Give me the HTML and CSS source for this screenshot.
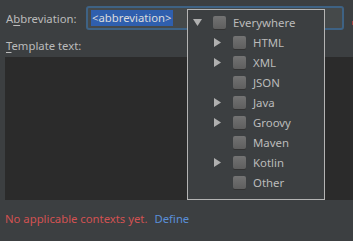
FILE: index.html
```html
<!DOCTYPE html>
<html>
<head>
<meta charset="utf-8">
<link rel="stylesheet" href="styles.css">
</head>
<body>
<div class="panel">
  <div class="abbr-row">
    <span class="label">A<u>b</u>breviation:</span>
    <div class="field"><span class="sel">&lt;abbreviation&gt;</span></div>
  </div>
  <div class="tpl-label"><u>T</u>emplate text:</div>
  <div class="editor"></div>
  <div class="msg"><span class="err">No applicable contexts yet.</span><span class="link">Define</span></div>
  <div class="mark"></div>
</div>
<div class="popup">
  <div class="item">
    <span class="arrow"><svg width="9" height="7" viewBox="0 0 9 7"><polygon points="0,0 9,0 4.5,7" fill="#b0b0b0"/></svg></span>
    <span class="cb"></span><span class="txt">Everywhere</span>
  </div>
  <div class="item child">
    <span class="arrow"><svg width="7" height="9" viewBox="0 0 7 9"><polygon points="0,0 7,4.5 0,9" fill="#b0b0b0"/></svg></span>
    <span class="cb"></span><span class="txt">HTML</span>
  </div>
  <div class="item child">
    <span class="arrow"><svg width="7" height="9" viewBox="0 0 7 9"><polygon points="0,0 7,4.5 0,9" fill="#b0b0b0"/></svg></span>
    <span class="cb"></span><span class="txt">XML</span>
  </div>
  <div class="item child">
    <span class="arrow"></span>
    <span class="cb"></span><span class="txt">JSON</span>
  </div>
  <div class="item child">
    <span class="arrow"><svg width="7" height="9" viewBox="0 0 7 9"><polygon points="0,0 7,4.5 0,9" fill="#b0b0b0"/></svg></span>
    <span class="cb"></span><span class="txt">Java</span>
  </div>
  <div class="item child">
    <span class="arrow"><svg width="7" height="9" viewBox="0 0 7 9"><polygon points="0,0 7,4.5 0,9" fill="#b0b0b0"/></svg></span>
    <span class="cb"></span><span class="txt">Groovy</span>
  </div>
  <div class="item child">
    <span class="arrow"></span>
    <span class="cb"></span><span class="txt">Maven</span>
  </div>
  <div class="item child">
    <span class="arrow"><svg width="7" height="9" viewBox="0 0 7 9"><polygon points="0,0 7,4.5 0,9" fill="#b0b0b0"/></svg></span>
    <span class="cb"></span><span class="txt">Kotlin</span>
  </div>
  <div class="item child">
    <span class="arrow"></span>
    <span class="cb"></span><span class="txt">Other</span>
  </div>
</div>
</body>
</html>
```
FILE: styles.css
```css
html, body {
  margin: 0;
  padding: 0;
  width: 353px;
  height: 241px;
  overflow: hidden;
  background: #3c3f41;
  font-family: "Noto Sans", "Open Sans", sans-serif;
  font-size: 11.3px;
  color: #bbbbbb;
}
u { text-decoration: underline; text-underline-offset: 2px; }
.panel {
  position: relative;
  padding-top: 6px;
  padding-left: 5px;
}
.abbr-row {
  display: flex;
  align-items: center;
  height: 24px;
}
.label {
  width: 80px;
  flex: none;
  padding-left: 1px;
}
.field {
  box-sizing: border-box;
  width: 258px;
  height: 24px;
  border: 2px solid #3e6284;
  border-radius: 3px;
  background: #45494a;
  display: flex;
  align-items: center;
  padding-left: 3px;
}
.sel {
  background: #2f5fae;
  color: #dcdcdc;
  height: 16px;
  line-height: 16px;
  padding: 0 1px;
}
.tpl-label {
  height: 27px;
  line-height: 32px;
  padding-left: 1px;
}
.editor {
  height: 143px;
  background: #2b2b2b;
  margin-right: -10px;
}
.msg {
  height: 36px;
  line-height: 37px;
  display: flex;
  gap: 7px;
}
.err { color: #d25252; }
.link { color: #5a8fd8; }
.mark {
  position: absolute;
  right: 0;
  top: 21px;
  width: 1px;
  height: 4px;
  background: #a04040;
}
.popup {
  position: absolute;
  left: 187px;
  top: 9px;
  width: 138px;
  height: 191px;
  box-sizing: border-box;
  border: 1px solid #b4b4b4;
  background: #3c3f41;
  padding-top: 2px;
  font-size: 11.4px;
}
.item {
  display: flex;
  align-items: center;
  height: 20px;
  padding-left: 4px;
}
.item.child { padding-left: 24px; }
.arrow {
  width: 10px;
  display: flex;
  justify-content: center;
  align-items: center;
  flex: none;
}
.arrow svg { display: block; }
.cb {
  width: 13px;
  height: 13px;
  margin-left: 11px;
  margin-right: 7px;
  border-radius: 2px;
  background: linear-gradient(#737373, #5e5e5e);
  box-shadow: 0 1px 0 #333;
  flex: none;
}
.txt { white-space: nowrap; }
```
